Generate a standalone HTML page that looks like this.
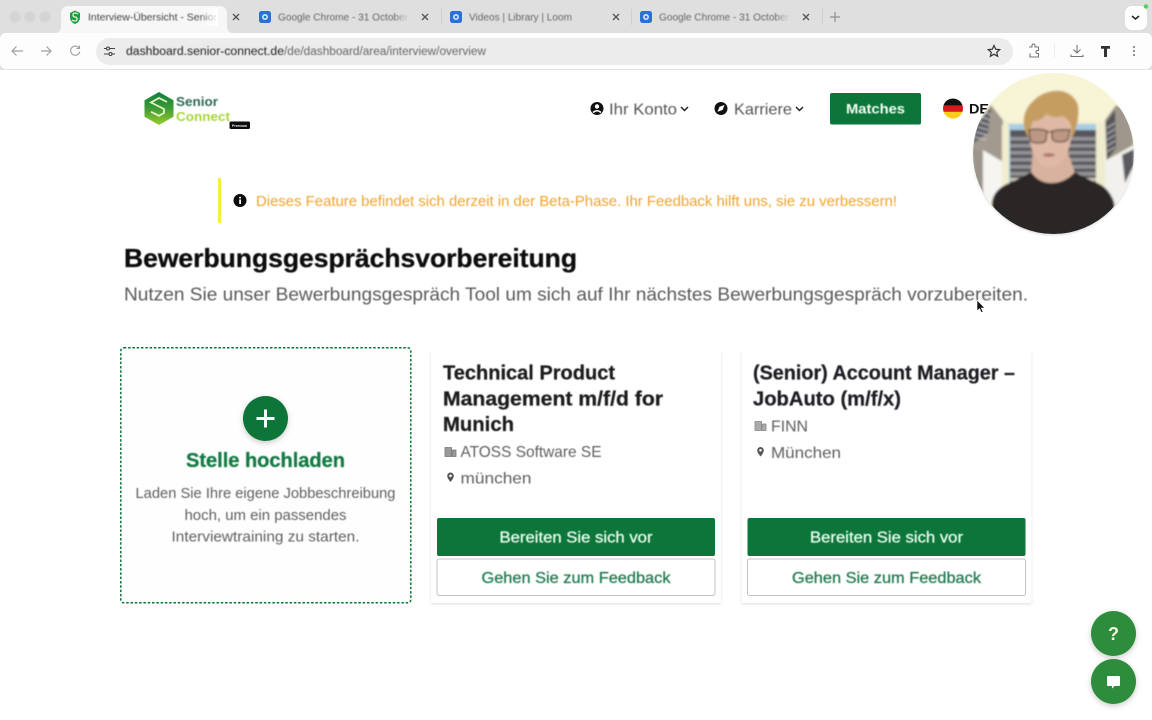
<!DOCTYPE html>
<html lang="de"><head><meta charset="utf-8"><title>Interview-Übersicht</title>
<style>
html,body{margin:0;padding:0;background:#fff;width:1152px;height:720px;overflow:hidden}
svg{display:block}
text{font-family:"Liberation Sans",sans-serif}
</style></head><body>
<svg width="1152" height="720" viewBox="0 0 1152 720" xmlns="http://www.w3.org/2000/svg">
<defs>
<filter id="b" x="-5%" y="-20%" width="110%" height="140%"><feGaussianBlur stdDeviation="0.4"/></filter>
<filter id="b1" x="-30%" y="-30%" width="160%" height="160%"><feGaussianBlur stdDeviation="0.9"/></filter>
<filter id="b2" x="-5%" y="-5%" width="110%" height="110%"><feGaussianBlur stdDeviation="1"/></filter>
<filter id="sh" x="-20%" y="-20%" width="140%" height="140%"><feDropShadow dx="0" dy="1" stdDeviation="1.200" flood-color="#000" flood-opacity=".14"/></filter>
<filter id="sh2" x="-40%" y="-40%" width="180%" height="180%"><feDropShadow dx="0" dy="2" stdDeviation="3" flood-color="#000" flood-opacity=".2"/></filter>
<clipPath id="cam"><circle cx="1053.500" cy="153.500" r="80.500"/></clipPath>
<linearGradient id="fade" x1="0" x2="1"><stop offset="0" stop-color="#fff" stop-opacity="0"/><stop offset="1" stop-color="#fff"/></linearGradient>
<linearGradient id="fadeg" x1="0" x2="1"><stop offset="0" stop-color="#dfdfdf" stop-opacity="0"/><stop offset="1" stop-color="#dfdfdf"/></linearGradient>
<linearGradient id="flagclip" x1="0" y1="0" x2="0" y2="1"><stop offset=".33" stop-color="#111"/><stop offset=".36" stop-color="#d8171e"/><stop offset=".65" stop-color="#d8171e"/><stop offset=".68" stop-color="#fbcc1a"/></linearGradient>
<linearGradient id="logo" x1="0" y1="0" x2="0" y2="1"><stop offset="0" stop-color="#0f7f3c"/><stop offset=".5" stop-color="#3c9c35"/><stop offset="1" stop-color="#9ccb2e"/></linearGradient>
<g id="fav"><rect x="-6" y="-6" width="12" height="12" rx="2.500" fill="#2a6fdb"/><circle r="3" fill="#cfe0fb"/><circle r="1.300" fill="#2a6fdb"/></g>
<g id="x"><path d="M-3-3 3 3M3-3-3 3" stroke="#555" stroke-width="1.300" fill="none"/></g>
</defs>

<!-- browser chrome -->
<rect width="1152" height="70" fill="#dfdfdf"/>
<g fill="#d4d4d4" filter="url(#b1)"><circle cx="15" cy="17" r="5.500"/><circle cx="30" cy="17" r="5.500"/><circle cx="45" cy="17" r="5.500"/></g>
<path d="M54 33q7 0 7-6V14q0-8 8-8h150q8 0 8 8v13q0 6 7 6z" fill="#f7f7f7"/>
<rect x="0" y="33" width="1152" height="36" rx="6" fill="#fdfdfd"/>
<rect x="0" y="69" width="1152" height="1" fill="#e4e4e4"/>

<path d="M75 10.500 70 13v4q0 5 5 7 5-2 5-7v-4z" fill="#1d9a4a"/>
<path d="M78 14q-1.500-1-3-1-2 0-2 2t2 2 2 2-2 2-3-1" stroke="#e6f5c0" stroke-width="1.300" fill="none"/>
<g filter="url(#b)">
<text x="88" y="20.500" font-size="10" fill="#444" textLength="129" lengthAdjust="spacingAndGlyphs">Interview-Übersicht - Senior</text>
<text x="278" y="20.500" font-size="10" fill="#666" textLength="130" lengthAdjust="spacingAndGlyphs">Google Chrome - 31 October</text>
<text x="469" y="20.500" font-size="10" fill="#666" textLength="103" lengthAdjust="spacingAndGlyphs">Videos | Library | Loom</text>
<text x="659" y="20.500" font-size="10" fill="#666" textLength="130" lengthAdjust="spacingAndGlyphs">Google Chrome - 31 October</text>
</g>
<rect x="200" y="8" width="18" height="18" fill="url(#fade)"/>
<rect x="394" y="8" width="16" height="18" fill="url(#fadeg)"/>
<rect x="775" y="8" width="16" height="18" fill="url(#fadeg)"/>
<use href="#x" x="236" y="17"/><use href="#x" x="425" y="17"/><use href="#x" x="616" y="17"/><use href="#x" x="806" y="17"/>
<use href="#fav" x="265" y="17"/><use href="#fav" x="456" y="17"/><use href="#fav" x="646" y="17"/>
<g fill="#cfcfcf"><rect x="441" y="9" width="1" height="16"/><rect x="631" y="9" width="1" height="16"/><rect x="822" y="9" width="1" height="16"/></g>
<path d="M835 12v10M830 17h10" stroke="#8d8d8d" stroke-width="1.200"/>
<rect x="1125" y="6" width="22" height="24" rx="7" fill="#fff"/>
<path d="M1132 16l3.500 3 3.500-3" fill="none" stroke="#222" stroke-width="1.500"/>
<circle cx="1146" cy="6.500" r="2.200" fill="#4fd25e"/>

<path d="M23 51H12m4.500-4.500L12 51l4.500 4.500" fill="none" stroke="#a0a0a0" stroke-width="1.200"/>
<path d="M41 51h10m-4.500-4.500L51 51l-4.500 4.500" fill="none" stroke="#a0a0a0" stroke-width="1.200"/>
<path d="M79 48a4.600 4.600 0 1 0 .8 3.500M79.500 45.500v3h-3" fill="none" stroke="#a0a0a0" stroke-width="1.100"/>
<rect x="96" y="38" width="917" height="27" rx="13.500" fill="#ececec"/>
<g fill="none" stroke="#444" stroke-width="1.100"><path d="M104 48.500h3M110 48.500h5M104 54h5M112 54h3"/><circle cx="108" cy="48.500" r="1.500"/><circle cx="110.500" cy="54" r="1.500"/></g>
<g filter="url(#b)">
<text x="126" y="55" font-size="11.500" fill="#222" textLength="158" lengthAdjust="spacingAndGlyphs">dashboard.senior-connect.de</text>
<text x="284" y="55" font-size="11.500" fill="#666" textLength="202" lengthAdjust="spacingAndGlyphs">/de/dashboard/area/interview/overview</text>
</g>
<path d="M994 45.500l1.700 3.700 4 .4-3 2.700.9 4-3.600-2.100-3.600 2.100.9-4-3-2.700 4-.4z" fill="none" stroke="#333" stroke-width="1.200"/>
<path d="M1029 47h3v-1.500a1.500 1.500 0 0 1 3 0V47h3.500v3.500h-1a1.500 1.500 0 0 0 0 3h1V57H1030v-3.500" fill="none" stroke="#777" stroke-width="1.100"/>
<rect x="1054" y="44" width="1" height="14" fill="#ececec"/>
<path d="M1077 45v8m-3.500-3.500 3.500 3.500 3.500-3.500M1071 54.500v2h12v-2" fill="none" stroke="#777" stroke-width="1.100"/>
<path d="M1101 46h9v2.800h-3V57h-3v-8.200h-3z" fill="#333"/>
<g fill="#888"><circle cx="1134" cy="47" r="1.100"/><circle cx="1134" cy="51" r="1.100"/><circle cx="1134" cy="55" r="1.100"/></g>

<!-- logo -->
<path d="M159 92l14.500 8.300v16.400L159 125l-14.500-8.300v-16.400z" fill="url(#logo)"/>
<path d="M167 102l-8-4-8 4.500 13 6.500v4l-5 2.800-8-4" fill="none" stroke="#e4f2c4" stroke-width="1.800"/>
<g filter="url(#b)">
<text x="176" y="106" font-size="13" font-weight="700" fill="#2f6b55" textLength="42" lengthAdjust="spacingAndGlyphs">Senior</text>
<text x="176" y="121" font-size="13" font-weight="700" fill="#a9d53a" textLength="54" lengthAdjust="spacingAndGlyphs">Connect</text>
</g>
<rect x="229.500" y="121.500" width="20.500" height="7.500" rx="1.500" fill="#0b0b0b"/>
<text x="232" y="127" font-size="4" fill="#eee" font-weight="700" textLength="15" lengthAdjust="spacingAndGlyphs">Premium</text>

<!-- nav -->
<circle cx="597" cy="108.500" r="6.500" fill="#111"/>
<circle cx="597" cy="106.500" r="2.200" fill="#fff"/><path d="M593 112.500q4-3.500 8 0" stroke="#fff" stroke-width="1.500" fill="none"/>
<circle cx="721" cy="108.500" r="6.500" fill="#111"/>
<path d="M724.500 105l-2 5-5 1.700 2-5z" fill="#fff"/>
<g filter="url(#b)">
<text x="609" y="114.500" font-size="16" fill="#555" textLength="68" lengthAdjust="spacingAndGlyphs">Ihr Konto</text>
<text x="734" y="114.500" font-size="16" fill="#555" textLength="58" lengthAdjust="spacingAndGlyphs">Karriere</text>
</g>
<path d="M681 107l3.500 3.500L688 107M796 107l3.500 3.500L803 107" fill="none" stroke="#222" stroke-width="1.500"/>
<rect x="830" y="93" width="91" height="31.500" rx="2" fill="#0c7539"/>
<text x="846" y="113.500" font-size="14" font-weight="700" fill="#f2fff5" textLength="59" lengthAdjust="spacingAndGlyphs" filter="url(#b)">Matches</text>
<circle cx="953" cy="108.500" r="10" fill="url(#flagclip)"/>
<text x="969" y="113.500" font-size="14" font-weight="700" fill="#111" textLength="20" lengthAdjust="spacingAndGlyphs">DE</text>

<!-- alert -->
<rect x="218" y="178" width="3" height="45" fill="#f5ee3c"/>
<circle cx="240" cy="200.500" r="6.500" fill="#0a0a0a"/>
<rect x="239.200" y="199.500" width="1.800" height="4.500" fill="#fff"/><rect x="239.200" y="196.800" width="1.800" height="1.700" fill="#fff"/>
<text x="256" y="205.800" font-size="14.500" fill="#f2a32a" textLength="641" lengthAdjust="spacingAndGlyphs" filter="url(#b)">Dieses Feature befindet sich derzeit in der Beta-Phase. Ihr Feedback hilft uns, sie zu verbessern!</text>

<!-- heading -->
<g filter="url(#b)">
<text x="124" y="267" font-size="26" font-weight="700" stroke="#0b0b0b" stroke-width=".35" fill="#0b0b0b" textLength="453" lengthAdjust="spacingAndGlyphs">Bewerbungsgesprächsvorbereitung</text>
<text x="124" y="300.500" font-size="18" fill="#5a5a5a" textLength="904" lengthAdjust="spacingAndGlyphs">Nutzen Sie unser Bewerbungsgespräch Tool um sich auf Ihr nächstes Bewerbungsgespräch vorzubereiten.</text>
</g>
<path d="M977 300v11l2.600-2.400 1.700 4 1.700-.8-1.700-3.800h3.500z" fill="#111" stroke="#fff" stroke-width=".6"/>

<!-- upload card -->
<rect x="120.800" y="347.800" width="290" height="255" rx="3" fill="#fefefe" stroke="#0c7539" stroke-width="1.500" stroke-dasharray="2.500 1.800"/>
<circle cx="265.500" cy="418.500" r="22.500" fill="#0f7538" filter="url(#sh2)"/>
<path d="M265.500 409.500v18M256.500 418.500h18" stroke="#fff" stroke-width="3"/>
<g filter="url(#b)" text-anchor="middle">
<text x="265.500" y="467" font-size="20" font-weight="700" stroke="#137a45" stroke-width=".3" fill="#137a45" textLength="159" lengthAdjust="spacingAndGlyphs">Stelle hochladen</text>
<text x="265.500" y="498" font-size="14.500" fill="#5f5f5f" textLength="260" lengthAdjust="spacingAndGlyphs">Laden Sie Ihre eigene Jobbeschreibung</text>
<text x="265.500" y="520" font-size="14.500" fill="#5f5f5f" textLength="162" lengthAdjust="spacingAndGlyphs">hoch, um ein passendes</text>
<text x="265.500" y="541.500" font-size="14.500" fill="#5f5f5f" textLength="188" lengthAdjust="spacingAndGlyphs">Interviewtraining zu starten.</text>
</g>

<!-- card 1 -->
<g>
<rect x="431" y="350" width="290" height="253" rx="2" fill="#fff" filter="url(#sh)"/>
<rect x="428" y="340" width="296" height="10" fill="#fff"/>
<g filter="url(#b)">
<text x="443" y="379.500" font-size="20" font-weight="700" stroke="#1a1a1a" stroke-width=".25" fill="#1a1a1a" textLength="172" lengthAdjust="spacingAndGlyphs">Technical Product</text>
<text x="443" y="405.500" font-size="20" font-weight="700" stroke="#1a1a1a" stroke-width=".25" fill="#1a1a1a" textLength="220" lengthAdjust="spacingAndGlyphs">Management m/f/d for</text>
<text x="443" y="431" font-size="20" font-weight="700" stroke="#1a1a1a" stroke-width=".25" fill="#1a1a1a" textLength="71" lengthAdjust="spacingAndGlyphs">Munich</text>
<text x="460.500" y="457" font-size="16" fill="#5f5f5f" textLength="141" lengthAdjust="spacingAndGlyphs">ATOSS Software SE</text>
<text x="460.500" y="483.500" font-size="16" fill="#5f5f5f" textLength="71" lengthAdjust="spacingAndGlyphs">münchen</text>
</g>
<path d="M445 447.500h6.500v9H445zM452 450h4v6.500h-4z" fill="#999" stroke="#777" stroke-width=".8"/>
<path d="M450.500 472.500a3.300 3.300 0 0 0-3.300 3.300c0 2.600 3.300 6.200 3.300 6.200s3.300-3.600 3.300-6.200a3.300 3.300 0 0 0-3.300-3.300zm0 4.600a1.300 1.300 0 1 1 0-2.600 1.300 1.300 0 0 1 0 2.600z" fill="#555"/>
<rect x="437" y="518" width="278" height="38" rx="2" fill="#0c7539"/>
<rect x="437" y="559" width="278" height="36.500" rx="2" fill="#fff" stroke="#c4c4c4"/>
<g filter="url(#b)" text-anchor="middle">
<text x="576" y="542.500" font-size="16" stroke="#eafff0" stroke-width=".3" fill="#eafff0" textLength="153" lengthAdjust="spacingAndGlyphs">Bereiten Sie sich vor</text>
<text x="576" y="583" font-size="16" stroke="#217a4f" stroke-width=".3" fill="#217a4f" textLength="189" lengthAdjust="spacingAndGlyphs">Gehen Sie zum Feedback</text>
</g>
</g>

<!-- card 2 -->
<g>
<rect x="741.500" y="350" width="290" height="253" rx="2" fill="#fff" filter="url(#sh)"/>
<rect x="738" y="340" width="296" height="10" fill="#fff"/>
<g filter="url(#b)">
<text x="753" y="379.500" font-size="20" font-weight="700" stroke="#1f1f24" stroke-width=".25" fill="#1f1f24" textLength="262" lengthAdjust="spacingAndGlyphs">(Senior) Account Manager –</text>
<text x="753" y="405.500" font-size="20" font-weight="700" stroke="#1f1f24" stroke-width=".25" fill="#1f1f24" textLength="148" lengthAdjust="spacingAndGlyphs">JobAuto (m/f/x)</text>
<text x="771" y="431.500" font-size="16" fill="#5f5f5f" textLength="37" lengthAdjust="spacingAndGlyphs">FINN</text>
<text x="771" y="458" font-size="16" fill="#5f5f5f" textLength="70" lengthAdjust="spacingAndGlyphs">München</text>
</g>
<path d="M755 421.500h6.500v9H755zM762 424h4v6.500h-4z" fill="#aaa" stroke="#888" stroke-width=".8"/>
<path d="M760.500 447a3.300 3.300 0 0 0-3.300 3.300c0 2.600 3.300 6.200 3.300 6.200s3.300-3.600 3.300-6.200a3.300 3.300 0 0 0-3.300-3.300zm0 4.600a1.300 1.300 0 1 1 0-2.600 1.300 1.300 0 0 1 0 2.600z" fill="#555"/>
<rect x="747.500" y="518" width="278" height="38" rx="2" fill="#0c7539"/>
<rect x="747.500" y="559" width="278" height="36.500" rx="2" fill="#fff" stroke="#c4c4c4"/>
<g filter="url(#b)" text-anchor="middle">
<text x="886.500" y="542.500" font-size="16" stroke="#eafff0" stroke-width=".3" fill="#eafff0" textLength="153" lengthAdjust="spacingAndGlyphs">Bereiten Sie sich vor</text>
<text x="886.500" y="583" font-size="16" stroke="#217a4f" stroke-width=".3" fill="#217a4f" textLength="189" lengthAdjust="spacingAndGlyphs">Gehen Sie zum Feedback</text>
</g>
</g>

<!-- floating buttons -->
<circle cx="1113.500" cy="633.500" r="22.500" fill="#2d8c3c" filter="url(#sh2)"/>
<text x="1113.500" y="640" font-size="18" font-weight="700" fill="#f2f7d8" text-anchor="middle">?</text>
<circle cx="1113.500" cy="681.500" r="22.500" fill="#2d8c3c" filter="url(#sh2)"/>
<path d="M1108 676h11a1 1 0 0 1 1 1v8a1 1 0 0 1-1 1h-4.500l-2.500 2.500V686h-4a1 1 0 0 1-1-1v-8a1 1 0 0 1 1-1z" fill="#fff"/>

<!-- webcam -->
<circle cx="1053.500" cy="155" r="80.500" fill="#000" opacity=".12" filter="url(#b2)"/>
<g clip-path="url(#cam)"><g filter="url(#b2)">
<rect x="970" y="70" width="170" height="170" fill="#f8f4d6"/>
<rect x="1003" y="121" width="102" height="80" fill="#f2eed0"/>
<rect x="1008" y="124" width="90" height="62" fill="#a7cde3"/>
<rect x="1010" y="130" width="86" height="60" fill="#55555a"/>
<g fill="#96969a"><rect x="1010" y="137" width="86" height="3.500"/><rect x="1010" y="144" width="86" height="3.500"/><rect x="1010" y="151" width="86" height="3.500"/><rect x="1010" y="158" width="86" height="3.500"/><rect x="1010" y="165" width="86" height="3.500"/><rect x="1010" y="172" width="86" height="3.500"/></g>
<rect x="1010" y="178" width="86" height="3" fill="#cfcac0"/>
<path d="M991 105l12 15 .5 44-31-18V130z" fill="#a39a8f"/>
<path d="M991 108l-3 25-14 10 2-18z" fill="#5a5a62"/>
<g stroke="#c9c9cc" stroke-width="1"><path d="M976 132l11 3M978 127l10 3M980 122l9 3M982 117l8 3M984 112l7 3M975 137l12 3"/></g>
<path d="M972 146l11 6 .5 46-11-20z" fill="#9c958c"/>
<path d="M983 150l20 12v24l-4 14-16 2z" fill="#f6f5f2"/>
<path d="M1116 105l-11 15 1.500 40 27-15v-30z" fill="#9f978b"/>
<path d="M1106 122l9-12 1 38-9 12z" fill="#55555c"/>
<g stroke="#c9c9cc" stroke-width="1"><path d="M1107 128l8-5M1107 134l8-5M1107 140l8-5M1107 146l8-5M1107 152l8-5"/></g>
<path d="M1104 162l30-16 2 40-14 26-18-20z" fill="#f2f1ee"/>
<path d="M1122 155l12-6v16l-9 18z" fill="#5a5a60"/>
<path d="M1096 124h9v70h-9z" fill="#f0ecd0"/>
<path d="M1002 125h7v65h-7z" fill="#f2eecd"/>
<!-- neck -->
<path d="M1033 150h34l8 23q-10 12-24 11-13 0-20-12z" fill="#d8b29e"/>
<!-- face -->
<path d="M1028 120q0-12 22-12 22 0 22 14 0 26-8 36-6 9-14 9-9 0-14-9-8-12-8-38z" fill="#dfb9a5"/>
<!-- hair -->
<path d="M1024 126q-2-14 8-24 12-13 30-11 12 3 16 14 2 11-3 26l-3 8-1-14q-3-7-9-9-8 3-16-2-4 7-13 7-3 6-2 14l-3 2q-3-5-4-11z" fill="#c69d60"/>
<!-- glasses -->
<path d="M1029 130q10-2 18 1l-1 9q-1 3-8 3-7 0-8-4zM1052 131q9-2 18-1l-2 9q-2 3-8 3-7 0-8-4z" fill="#bc9884" stroke="#5a4338" stroke-width="1.300"/>
<path d="M1047 132h5" stroke="#5a4338" stroke-width="1.200"/>
<ellipse cx="1049" cy="155" rx="6" ry="1.800" fill="#a8716c"/>
<!-- shirt -->
<path d="M992 202q2-14 20-20 10-5 19-10 8 11 20 11 14 0 24-11 10 6 20 10 14 5 19 20l6 40H990z" fill="#2a2827"/>
</g></g>
</svg>
</body></html>
